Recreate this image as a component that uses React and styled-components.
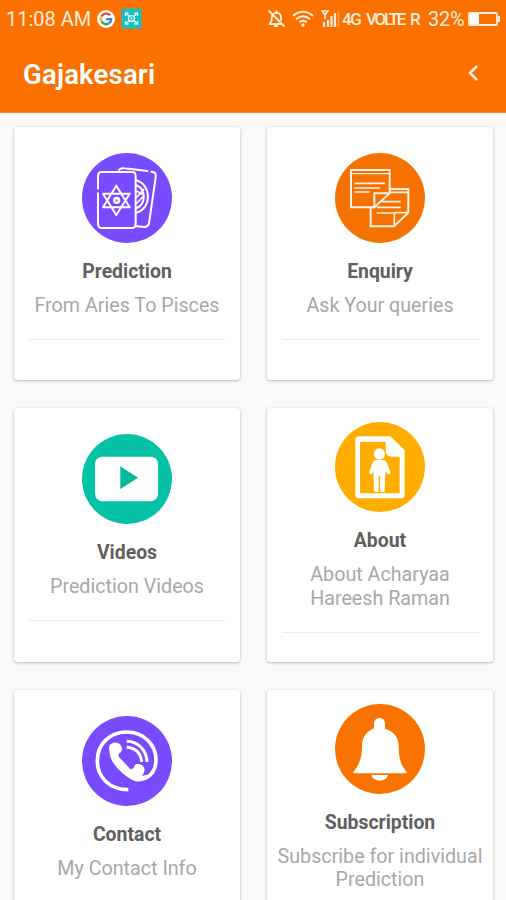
import React from "react";
import styled, { createGlobalStyle } from "styled-components";

const GlobalStyle = createGlobalStyle`
  *, *::before, *::after { box-sizing: border-box; }
  body {
    margin: 0;
    background: #fafafa;
    font-family: Roboto, "Liberation Sans", sans-serif;
    overflow: hidden;
  }
`;

const Screen = styled.div`
  width: 506px;
  height: 900px;
  overflow: hidden;
  display: flex;
  flex-direction: column;
  background: #fafafa;
`;

const Header = styled.header`
  flex: none;
  height: 113px;
  background: #fa7100;
  color: #fff;
  border-bottom: 1px solid #f5842c;
`;

const StatusBar = styled.div`
  display: flex;
  align-items: center;
  height: 37px;
  padding: 0 5px 0 6px;
  color: #ffeedd;
`;

const StatusText = styled.span`
  flex: none;
  width: ${(p) => p.$width}px;
  margin-right: ${(p) => p.$gap}px;
  font-size: ${(p) => p.$size}px;
  letter-spacing: ${(p) => p.$spacing || 0}px;
  font-weight: ${(p) => p.$weight || 400};
  line-height: 24px;
  white-space: nowrap;
`;

const StatusIcon = styled.svg`
  flex: none;
  display: block;
  margin-right: ${(p) => p.$gap || 0}px;
`;

const Spacer = styled.div`
  flex: 1;
`;

const Toolbar = styled.div`
  display: flex;
  align-items: center;
  justify-content: space-between;
  height: 75px;
  padding: 0 27px 0 23px;
`;

const AppTitle = styled.h1`
  margin: 1px 0 0;
  font-size: 27.5px;
  line-height: 34px;
  font-weight: 600;
  letter-spacing: 0.2px;
`;

const BackButton = styled.button`
  display: flex;
  padding: 0;
  margin-top: -3px;
  border: 0;
  background: none;
`;

const Grid = styled.main`
  display: grid;
  grid-template-columns: 226px 226px;
  grid-auto-rows: 253.4px;
  gap: 28px 27px;
  padding: 14px;
`;

const Card = styled.section`
  display: flex;
  flex-direction: column;
  align-items: center;
  justify-content: center;
  padding: 0 0 15px;
  background: #fff;
  border-radius: 3px;
  box-shadow: 0 1px 3px rgba(0, 0, 0, 0.26), 0 0 1px rgba(0, 0, 0, 0.12);
`;

const CardIcon = styled.svg`
  flex: none;
  width: 90px;
  height: 90px;
  display: block;
`;

const CardTitle = styled.h2`
  margin: 17px 0 0;
  font-size: 19.4px;
  line-height: 23px;
  font-weight: 700;
  color: #606060;
`;

const CardText = styled.p`
  width: 100%;
  margin: 11px 0 0;
  font-size: 19.7px;
  line-height: 23.4px;
  text-align: center;
  white-space: pre-line;
  color: #a8a8a8;
`;

const Rule = styled.div`
  width: 197px;
  height: 1px;
  margin-top: 21.5px;
  background: #ececec;
`;

const PredictionIcon = () => (
  <CardIcon viewBox="22 23 270 270">
    <circle cx="157" cy="158" r="135" fill="#784bff" />
    <g fill="none" stroke="#fff" strokeWidth="6" strokeLinecap="round" strokeLinejoin="round">
      <path d="M70 130V92Q70 80 82 80H172Q183 80 183 92V235Q183 248 171 248H82Q70 248 70 235V144" />
      <path d="M133 74Q138 67 150 69L218 77" />
      <path d="M230 79L238 81Q245 84 243 96L223 234Q220 246 207 245L186 243" />
      <path d="M187 105C231 121 231 187 187 202M187 120C214 134 214 174 187 188" />
      <path d="M187 138L201 146M187 155L207 132M187 173L208 151" strokeWidth="5" />
      <path d="M125 121L165 186H85Z M125 209L165 145H85Z" />
      <circle cx="126" cy="165" r="8" />
      <circle cx="126" cy="165" r="1" />
    </g>
  </CardIcon>
);

const EnquiryIcon = () => (
  <CardIcon viewBox="22 23 270 270">
    <circle cx="157" cy="158" r="135" fill="#f67200" />
    <g fill="none" stroke="#fff1e3" strokeWidth="6">
      <path d="M140 186H70V74H186V144L140 186V144H186" />
      <path d="M70 85H186" strokeWidth="4" />
      <path d="M186 131H242V202L199 243H129V187" />
      <path d="M242 202H200V243M187 141H242" strokeWidth="5" />
      <path d="M80 114H172M80 128H157M80 140H126M163 169H219M147 186H219M147 203H197" strokeWidth="5" />
    </g>
  </CardIcon>
);

const VideosIcon = () => (
  <CardIcon viewBox="22 22 270 270">
    <circle cx="157" cy="157" r="135" fill="#05c2a6" />
    <path d="M82 90H229Q249 92 250 111V202Q249 221 229 224H82Q63 221 61 202V111Q63 92 82 90Z" fill="#fff" />
    <path d="M137 119L190 153L137 187Z" fill="#05b99e" />
  </CardIcon>
);

const AboutIcon = () => (
  <CardIcon viewBox="22 21 270 270">
    <circle cx="157" cy="156" r="135" fill="#ffae00" />
    <path
      fill="#fff"
      fillRule="evenodd"
      d="M93 64H188L231 106V239Q231 250 220 250H94Q83 250 83 239V76Q83 64 93 64ZM97 80V235H216V125H190Q174 123 174 106V80Z"
    />
    <circle cx="155" cy="117" r="17" fill="#fff" />
    <path
      fill="#fff"
      d="M144 135H166Q175 136 179 147L188 171Q189 178 181 178L173 169L171 230H157V184H153V230H139L137 169L133 177Q125 180 125 171L134 145Q137 136 144 135Z"
    />
  </CardIcon>
);

const ContactIcon = () => (
  <CardIcon viewBox="22 22 270 270">
    <circle cx="157" cy="157" r="135" fill="#784bff" />
    <path
      d="M161 243C105 243 68 206 68 157C68 106 105 70 157 70C207 70 244 108 244 153C244 194 216 217 182 212"
      fill="none"
      stroke="#fff"
      strokeWidth="11"
    />
    <path
      fill="#fff"
      d="M103 119C103 105 119 98 131 104C141 109 145 121 139 130C131 134 131 139 133 145L168 182C175 181 178 178 180 170C187 163 199 166 205 172C213 181 210 194 201 201C221 199 226 195 232 190C222 213 199 220 178 216C153 207 110 166 106 140Z"
    />
    <path d="M156 98C192 98 216 126 217 160M156 115C186 119 199 136 201 160" fill="none" stroke="#fff" strokeWidth="9" />
  </CardIcon>
);

const SubscriptionIcon = () => (
  <CardIcon viewBox="22 21 270 270">
    <circle cx="157" cy="156" r="135" fill="#fa7300" />
    <path
      fill="#fff"
      d="M139 78Q140 64 156 63Q171 64 172 78V95C200 104 212 121 213 145C213 180 217 201 237 225V229H77V225C97 200 103 178 103 146C103 121 116 104 139 94Z"
    />
    <path d="M131 234H181C176 257 136 256 131 234Z" fill="#fff" />
  </CardIcon>
);

const MutedBell = () => (
  <StatusIcon width="17" height="18" viewBox="0 0 17 18" $gap={7}>
    <g fill="none" stroke="currentColor" strokeWidth="1.8" strokeLinecap="round" strokeLinejoin="round">
      <path d="M1 1L16 16M6 3.5C10 1.5 13 4 13 7V10M4 5.5L3.5 11L1.5 14H13M6.5 16H9.5M8.5 1V3" />
    </g>
  </StatusIcon>
);

const Wifi = () => (
  <StatusIcon width="22" height="17" viewBox="0 0 22 17" $gap={7}>
    <g fill="none" stroke="currentColor" strokeWidth="1.9">
      <path d="M1 6C7 .3 15 .3 21 6M4 9.3C8.5 5.3 13.5 5.3 18 9.3M7.2 12.3C9.7 10.3 12.3 10.3 14.8 12.3" />
    </g>
    <circle cx="11" cy="15" r="1.7" fill="currentColor" />
  </StatusIcon>
);

const Signal = () => (
  <StatusIcon width="19" height="18" viewBox="0 0 19 18" $gap={2}>
    <path d="M1 1H7L4 5ZM4 3V9" stroke="currentColor" strokeWidth="1.6" fill="none" />
    <path d="M3 12V17M7 10V17M10.5 6V17M14 3V17" stroke="currentColor" strokeWidth="2.2" />
    <path d="M17.5 1V17" stroke="currentColor" strokeWidth="1.5" opacity=".4" />
  </StatusIcon>
);

const Battery = () => (
  <StatusIcon width="33" height="14" viewBox="0 0 33 14">
    <rect x="1" y="1" width="28" height="12" rx="1" fill="none" stroke="currentColor" strokeWidth="1.8" />
    <rect x="2" y="2" width="9" height="10" fill="#fff" />
    <path d="M30 4H32V10H30Z" fill="currentColor" />
  </StatusIcon>
);

const GoogleBadge = () => (
  <StatusIcon width="18" height="18" viewBox="0 0 18 18" $gap={6}>
    <circle cx="9" cy="9" r="9" fill="#fff" />
    <g fill="none" strokeWidth="2.3">
      <path d="M13 5.3A5.2 5.2 0 0 0 4.500 6.600" stroke="#e5433b" />
      <path d="M4.500 6.600A5.2 5.2 0 0 0 4.500 11.500" stroke="#f6bd24" />
      <path d="M4.500 11.500A5.2 5.2 0 0 0 12.300 13.100" stroke="#34a853" />
      <path d="M12.300 13.100Q14.300 11.500 14.200 9.200H9.200" stroke="#3f7fec" />
    </g>
  </StatusIcon>
);

const ScanBadge = () => (
  <StatusIcon width="21" height="21" viewBox="0 0 21 21">
    <rect x=".5" y=".5" width="20" height="20" rx="2" fill="#16bfc2" />
    <g fill="none" stroke="#e4ffff" strokeWidth="1.4">
      <path d="M4.500 8V5H7.500M13.500 5H16.500V8M16.500 13V16H13.500M7.500 16H4.500V13" />
      <path d="M5 5.500L8 8M16 5.500L13 8M5 15.500L8 13M16 15.500L13 13" />
      <circle cx="10.500" cy="10.500" r="3" />
    </g>
    <circle cx="10.500" cy="10.500" r="1" fill="#e4ffff" />
  </StatusIcon>
);

const items = [
  { title: "Prediction", text: "From Aries To Pisces", Icon: PredictionIcon },
  { title: "Enquiry", text: "Ask Your queries", Icon: EnquiryIcon },
  { title: "Videos", text: "Prediction Videos", Icon: VideosIcon },
  { title: "About", text: "About Acharyaa\nHareesh Raman", Icon: AboutIcon },
  { title: "Contact", text: "My Contact Info", Icon: ContactIcon },
  { title: "Subscription", text: "Subscribe for individual\nPrediction", Icon: SubscriptionIcon },
];

export default function App() {
  return (
    <Screen>
      <GlobalStyle />
      <Header>
        <StatusBar>
          <StatusText $width={84} $gap={7} $size={20}>11:08 AM</StatusText>
          <GoogleBadge />
          <ScanBadge />
          <Spacer />
          <MutedBell />
          <Wifi />
          <Signal />
          <StatusText $width={19} $gap={5} $size={17} $spacing={-1.5} $weight={500}>4G</StatusText>
          <StatusText $width={38} $gap={6} $size={17} $spacing={-2.3} $weight={500}>VOLTE</StatusText>
          <StatusText $width={10} $gap={8} $size={17} $spacing={-1} $weight={500}>R</StatusText>
          <StatusText $width={37} $gap={3} $size={20} $spacing={-0.3}>32%</StatusText>
          <Battery />
        </StatusBar>
        <Toolbar>
          <AppTitle>Gajakesari</AppTitle>
          <BackButton aria-label="Back">
            <svg width="12" height="18" viewBox="0 0 12 18">
              <path d="M10 2L3 9L10 16" fill="none" stroke="#ffeedd" strokeWidth="2.500" />
            </svg>
          </BackButton>
        </Toolbar>
      </Header>
      <Grid>
        {items.map(({ title, text, Icon }) => (
          <Card key={title}>
            <Icon />
            <CardTitle>{title}</CardTitle>
            <CardText>{text}</CardText>
            <Rule />
          </Card>
        ))}
      </Grid>
    </Screen>
  );
}
